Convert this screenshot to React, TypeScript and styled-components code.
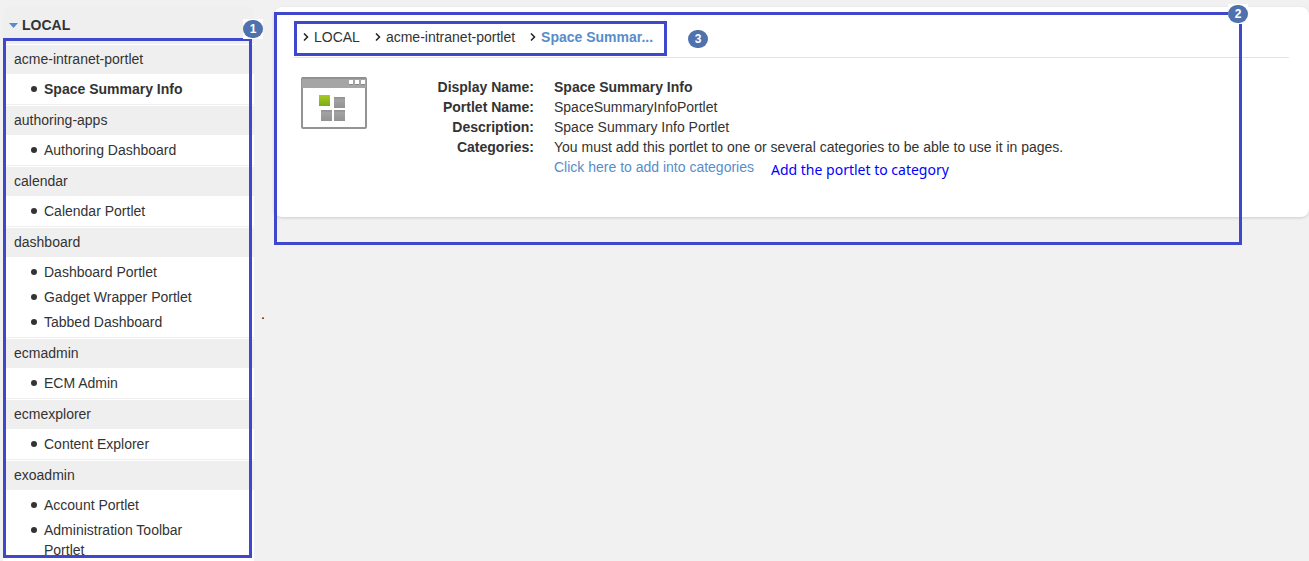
import React from "react";
import styled, { createGlobalStyle } from "styled-components";

const GlobalStyle = createGlobalStyle`
  * { box-sizing: border-box; }
  body {
    margin: 0;
    background: #f1f1f1;
    color: #333;
    font: 14px/20px "Liberation Sans", Arial, sans-serif;
  }
  ul, ol, dl, dd, h2, h3, p { margin: 0; padding: 0; }
  ul, ol { list-style: none; }
`;

const Page = styled.div`
  display: flex;
  height: 100vh;
  overflow: hidden;
`;

const Sidebar = styled.aside`
  position: relative;
  flex: none;
  width: 251px;
  margin-left: 3px;
  padding-top: 7px;
`;

const TreeTitle = styled.h2`
  border-radius: 8px 8px 0 0;
  background: #efefef;
`;

const TreeToggle = styled.button`
  display: flex;
  align-items: center;
  gap: 4px;
  width: 100%;
  height: 36px;
  padding: 0 6px;
  border: 0;
  background: none;
  color: inherit;
  font: bold 14px/20px "Liberation Sans", Arial, sans-serif;
`;

const Group = styled.section`
  padding-top: 1px;
  border-top: 1px solid #efefef;
  background: #fff;
`;

const GroupTitle = styled.h3`
  height: 29px;
  padding: 4px 11px;
  background: #efefef;
  font-size: 14px;
  font-weight: normal;
`;

const PortletList = styled.ul`
  padding: 5px 40px 0 41px;
`;

const PortletItem = styled.li`
  position: relative;
  padding-bottom: 5px;

  &::before {
    content: "";
    position: absolute;
    top: 7px;
    left: -13px;
    width: 6px;
    height: 6px;
    border-radius: 50%;
    background: #333;
  }
`;

const PortletLink = styled.a<{ $active?: boolean }>`
  color: inherit;
  font-weight: ${(p) => (p.$active ? "bold" : "normal")};
  text-decoration: none;
`;

const Gutter = styled.div`
  flex: none;
  width: 20px;
  padding: 304px 0 0 7px;
  color: #000;
`;

const Content = styled.main`
  flex: 1;
  min-width: 0;
  padding-top: 7px;
`;

const Card = styled.section`
  position: relative;
  min-height: 210px;
  padding: 14px 20px 40px;
  border-radius: 8px;
  background: #fff;
  box-shadow: 0 1px 3px rgba(0, 0, 0, 0.15);
`;

const CardHeader = styled.header`
  display: flex;
  align-items: center;
  gap: 21px;
  padding-bottom: 1px;
  border-bottom: 1px solid #e4e4e4;
`;

const Breadcrumb = styled.nav`
  padding: 3px 11px 6px 6px;
  border: 3px solid #3f48cc;
`;

const Crumbs = styled.ol`
  display: flex;
  gap: 15px;
`;

const Crumb = styled.li`
  display: flex;
  align-items: center;
  gap: 5px;
`;

const CrumbLink = styled.a<{ $current?: boolean }>`
  color: ${(p) => (p.$current ? "#578dc9" : "inherit")};
  font-weight: ${(p) => (p.$current ? "bold" : "normal")};
  text-decoration: none;
`;

const Details = styled.div`
  display: flex;
  align-items: flex-start;
  padding: 19px 0 0 7px;
`;

const Fields = styled.dl`
  display: grid;
  grid-template-columns: 167px 1fr;
  column-gap: 20px;
`;

const Label = styled.dt`
  font-weight: bold;
  text-align: right;
`;

const Value = styled.dd<{ $strong?: boolean }>`
  font-weight: ${(p) => (p.$strong ? "bold" : "normal")};
`;

const CategoryLine = styled.p`
  display: flex;
  gap: 17px;
  height: 20px;
`;

const CategoryLink = styled.a`
  color: #578dc9;
  text-decoration: none;
`;

const Note = styled.span`
  color: #00f;
  font: 14px/26px "Noto Sans", sans-serif;
`;

const Badge = styled.span`
  display: block;
  width: 20px;
  height: 18px;
  border-radius: 9px;
  background: #4f72ae;
  color: #fff;
  font-size: 12px;
  font-weight: bold;
  line-height: 18px;
  text-align: center;
`;

const Frame = styled.div`
  position: absolute;
  border: 3px solid #3f48cc;
  pointer-events: none;
`;

const TreeFrame = styled(Frame)`
  top: 38px;
  right: 2px;
  bottom: 3px;
  left: 0;
`;

const CardFrame = styled(Frame)`
  top: 5px;
  right: 67px;
  bottom: -28px;
  left: 0;
`;

const BadgeHolder = styled.div`
  position: absolute;
  padding: 1px 0;
  background: #fff;
`;

const TreeBadge = styled(BadgeHolder)`
  top: -22px;
  right: -14px;
`;

const CardBadge = styled(BadgeHolder)`
  top: -11px;
  right: -9px;
`;

const groups = [
  { name: "acme-intranet-portlet", portlets: ["Space Summary Info"] },
  { name: "authoring-apps", portlets: ["Authoring Dashboard"] },
  { name: "calendar", portlets: ["Calendar Portlet"] },
  {
    name: "dashboard",
    portlets: ["Dashboard Portlet", "Gadget Wrapper Portlet", "Tabbed Dashboard"],
  },
  { name: "ecmadmin", portlets: ["ECM Admin"] },
  { name: "ecmexplorer", portlets: ["Content Explorer"] },
  { name: "exoadmin", portlets: ["Account Portlet", "Administration Toolbar Portlet"] },
];

const crumbs = ["LOCAL", "acme-intranet-portlet", "Space Summar..."];

function Chevron() {
  return (
    <svg width="6" height="8" viewBox="0 0 6 8" aria-hidden="true">
      <path d="M1 0.5 L4.5 4 L1 7.5" fill="none" stroke="#222" strokeWidth="1.5" />
    </svg>
  );
}

function PortletIcon() {
  return (
    <svg width="66" height="52" viewBox="0 0 66 52" aria-hidden="true">
      <defs>
        <linearGradient id="green" x1="0" y1="0" x2="0" y2="1">
          <stop offset="0" stopColor="#a5cc22" />
          <stop offset="1" stopColor="#7cab16" />
        </linearGradient>
        <linearGradient id="grey" x1="0" y1="0" x2="0" y2="1">
          <stop offset="0" stopColor="#8f8f8f" />
          <stop offset="0.25" stopColor="#a2a2a2" />
          <stop offset="1" stopColor="#939393" />
        </linearGradient>
      </defs>
      <rect x="1" y="1" width="64" height="50" rx="1" fill="#fff" stroke="#949494" strokeWidth="2" />
      <rect x="1" y="1" width="64" height="10" fill="#a5a5a5" />
      <path d="M1 1H65" stroke="#8c8c8c" strokeWidth="1.5" />
      <path d="M48 3h4v4h-4zM54 3h4v4h-4zM60 3h4v4h-4z" fill="#fff" />
      <path d="M48 7.5h4M54 7.5h4M60 7.5h4" stroke="#888" />
      <rect x="18" y="18" width="11" height="11" fill="url(#green)" />
      <rect x="33" y="20" width="11" height="11" fill="url(#grey)" />
      <rect x="20" y="33" width="11" height="11" fill="url(#grey)" />
      <rect x="33" y="33" width="11" height="11" fill="url(#grey)" />
    </svg>
  );
}

export default function App() {
  return (
    <>
      <GlobalStyle />
      <Page>
        <Sidebar>
          <TreeTitle>
            <TreeToggle type="button" aria-expanded="true">
              <svg width="9" height="5" viewBox="0 0 9 5" aria-hidden="true">
                <path d="M0 0H9L4.5 5Z" fill="#578dc9" />
              </svg>
              LOCAL
            </TreeToggle>
          </TreeTitle>
          {groups.map((group) => (
            <Group key={group.name}>
              <GroupTitle>{group.name}</GroupTitle>
              <PortletList>
                {group.portlets.map((portlet) => (
                  <PortletItem key={portlet}>
                    <PortletLink href="#" $active={portlet === "Space Summary Info"}>
                      {portlet}
                    </PortletLink>
                  </PortletItem>
                ))}
              </PortletList>
            </Group>
          ))}
          <TreeFrame>
            <TreeBadge>
              <Badge>1</Badge>
            </TreeBadge>
          </TreeFrame>
        </Sidebar>
        <Gutter>.</Gutter>
        <Content>
          <Card>
            <CardHeader>
              <Breadcrumb aria-label="Breadcrumb">
                <Crumbs>
                  {crumbs.map((crumb, i) => (
                    <Crumb key={crumb}>
                      <Chevron />
                      <CrumbLink href="#" $current={i === crumbs.length - 1}>
                        {crumb}
                      </CrumbLink>
                    </Crumb>
                  ))}
                </Crumbs>
              </Breadcrumb>
              <Badge>3</Badge>
            </CardHeader>
            <Details>
              <PortletIcon />
              <Fields>
                <Label>Display Name:</Label>
                <Value $strong>Space Summary Info</Value>
                <Label>Portlet Name:</Label>
                <Value>SpaceSummaryInfoPortlet</Value>
                <Label>Description:</Label>
                <Value>Space Summary Info Portlet</Value>
                <Label>Categories:</Label>
                <Value>
                  <p>
                    You must add this portlet to one or several categories to be able to use it in
                    pages.
                  </p>
                  <CategoryLine>
                    <CategoryLink href="#">Click here to add into categories</CategoryLink>
                    <Note>Add the portlet to category</Note>
                  </CategoryLine>
                </Value>
              </Fields>
            </Details>
            <CardFrame>
              <CardBadge>
                <Badge>2</Badge>
              </CardBadge>
            </CardFrame>
          </Card>
        </Content>
      </Page>
    </>
  );
}
